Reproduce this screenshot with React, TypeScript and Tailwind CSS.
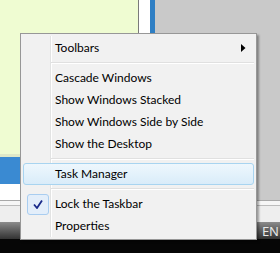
import React from "react";

function Sep() {
  return (
    <div className="h-[8px] flex items-center">
      <div className="w-[28px] shrink-0" />
      <div className="flex-1 flex flex-col">
        <div className="h-px bg-[#e0e0e0]" />
        <div className="h-px bg-white" />
      </div>
    </div>
  );
}

function Item({
  label,
  highlight,
  checked,
  arrow,
}: {
  label: string;
  highlight?: boolean;
  checked?: boolean;
  arrow?: boolean;
}) {
  return (
    <div
      className={
        "h-[22px] flex items-center relative rounded-[3px] border " +
        (highlight
          ? "border-[#a8d4f0] bg-gradient-to-b from-[#eef7fd] to-[#d9ecf9]"
          : "border-transparent")
      }
    >
      <div className="w-[28px] shrink-0 flex items-center justify-center h-full">
        {checked && (
          <div className="w-[22px] h-[21px] rounded-[3px] border border-[#a9cdf0] bg-[#e3eefa] flex items-center justify-center">
            <svg width="10" height="9" viewBox="0 0 10 9">
              <path d="M1 4.5 L4 8 L9 0.5" stroke="#1a2a8a" strokeWidth="1.8" fill="none" />
            </svg>
          </div>
        )}
      </div>
      <div className="pl-[3px] text-[12px] text-black leading-none">{label}</div>
      {arrow && (
        <svg className="absolute right-[7px] top-[6px]" width="5" height="8" viewBox="0 0 5 8">
          <path d="M0 0 L4.5 4 L0 8 Z" fill="#000" />
        </svg>
      )}
    </div>
  );
}

export default function App() {
  return (
    <div
      className="relative w-[280px] h-[253px] overflow-hidden"
      style={{ fontFamily: 'Lato, "Noto Sans", sans-serif' }}
    >
      {/* background */}
      <div className="flex flex-col w-full h-full">
        <div className="h-[200px] flex">
          <div className="w-[138px] flex flex-col">
            <div className="h-[154px] bg-[#effcd2]" />
            <div className="h-[3px] bg-[#dfe9c8]" />
            <div className="h-[27px] bg-[#3a8ad2]" />
            <div className="flex-1 bg-white" />
          </div>
          <div className="w-px bg-[#7a7a7a]" />
          <div className="w-[11px] bg-white" />
          <div className="w-[5px] bg-[#2f7fc4]" />
          <div className="flex-1 bg-[#c9c9c9]" />
        </div>
        <div className="h-px bg-[#a8a8a8]" />
        <div className="h-[4px] bg-[#f6f6f6]" />
        <div className="h-px bg-[#bcbcbc]" />
        <div className="h-[16px] bg-[#eeeeee]" />
        <div className="h-[17px] bg-gradient-to-b from-[#8c8c8c] to-[#333333] flex justify-end items-end">
          <span
            className="text-[13px] leading-none text-[#e8e8e8] pr-[1px] pb-[1px]"
            style={{ fontFamily: '"Noto Sans", sans-serif' }}
          >
            EN
          </span>
        </div>
        <div className="flex-1 bg-[#060606]" />
      </div>

      {/* context menu */}
      <div className="absolute left-[20px] top-[33px] w-[237px] h-[207px] border border-[#979797] bg-[#f1f1f1] shadow-[2px_2px_2px_rgba(0,0,0,0.35)] pt-[3px] pb-[2px] px-[2px]">
        <div className="absolute left-[29px] top-[2px] bottom-[2px] w-px bg-[#e2e3e3]" />
        <div className="absolute left-[30px] top-[2px] bottom-[2px] w-px bg-white" />
        <div className="relative flex flex-col">
          <Item label="Toolbars" arrow />
          <Sep />
          <Item label="Cascade Windows" />
          <Item label="Show Windows Stacked" />
          <Item label="Show Windows Side by Side" />
          <Item label="Show the Desktop" />
          <Sep />
          <Item label="Task Manager" highlight />
          <Sep />
          <Item label="Lock the Taskbar" checked />
          <Item label="Properties" />
        </div>
      </div>
    </div>
  );
}
